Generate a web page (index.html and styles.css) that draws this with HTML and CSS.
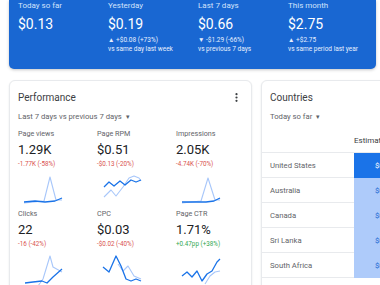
FILE: index.html
```html
<!DOCTYPE html>
<html lang="en">
<head>
    <meta charset="UTF-8">
    <meta name="viewport" content="width=device-width, initial-scale=1.0">
    <title>Earnings overview</title>
    <link rel="stylesheet" href="styles.css">
</head>
<body>
    <div class="page">
        <div class="summary">
            <div class="summary-item">
                <div class="summary-label">Today so far</div>
                <div class="summary-value">$0.13</div>
            </div>
            <div class="summary-item">
                <div class="summary-label">Yesterday</div>
                <div class="summary-value">$0.19</div>
                <div class="summary-change">&#9650; +$0.08 (+73%)</div>
                <div class="summary-change">vs same day last week</div>
            </div>
            <div class="summary-item">
                <div class="summary-label">Last 7 days</div>
                <div class="summary-value">$0.66</div>
                <div class="summary-change">&#9660; -$1.29 (-66%)</div>
                <div class="summary-change">vs previous 7 days</div>
            </div>
            <div class="summary-item">
                <div class="summary-label">This month</div>
                <div class="summary-value">$2.75</div>
                <div class="summary-change">&#9650; +$2.75</div>
                <div class="summary-change">vs same period last year</div>
            </div>
        </div>

        <div class="cards">
            <div class="card performance">
                <div class="card-head">
                    <div class="card-title">Performance</div>
                    <svg class="kebab" width="3" height="9" viewBox="0 0 3 9">
                        <circle cx="1.5" cy="1.2" r="1.1" fill="#3c4043"/>
                        <circle cx="1.5" cy="4.5" r="1.1" fill="#3c4043"/>
                        <circle cx="1.5" cy="7.8" r="1.1" fill="#3c4043"/>
                    </svg>
                </div>
                <div class="dropdown">Last 7 days vs previous 7 days <span class="caret">&#9662;</span></div>

                <div class="metrics">
                    <div class="metric">
                        <div class="metric-label">Page views</div>
                        <div class="metric-value">1.29K</div>
                        <div class="metric-change down">-1.77K (-58%)</div>
                        <svg class="spark" width="40" height="28" viewBox="0 0 40 28">
                            <polyline class="prev" points="0,27 20,25 26,1 32,24 38,24"/>
                            <polyline class="cur" points="0,26 11,25 21,26 31,25 38,22"/>
                        </svg>
                    </div>
                    <div class="metric">
                        <div class="metric-label">Page RPM</div>
                        <div class="metric-value">$0.51</div>
                        <div class="metric-change down">-$0.13 (-20%)</div>
                        <svg class="spark" width="40" height="28" viewBox="0 0 40 28">
                            <polyline class="prev" points="1,21 8,14 13,20 20,11 26,2 31,0 36,2 38,5"/>
                            <polyline class="cur" points="1,11 6,6 11,10 17,5 22,9 28,4 33,6 38,4"/>
                        </svg>
                    </div>
                    <div class="metric">
                        <div class="metric-label">Impressions</div>
                        <div class="metric-value">2.05K</div>
                        <div class="metric-change down">-4.74K (-70%)</div>
                        <svg class="spark" width="40" height="28" viewBox="0 0 40 28">
                            <polyline class="prev" points="0,27 19,25 26,2 33,24 38,24"/>
                            <polyline class="cur" points="0,26 12,26 24,26 32,25 38,22"/>
                        </svg>
                    </div>
                    <div class="metric">
                        <div class="metric-label">Clicks</div>
                        <div class="metric-value">22</div>
                        <div class="metric-change down">-16 (-42%)</div>
                        <svg class="spark" width="40" height="28" viewBox="0 0 40 28">
                            <polyline class="prev" points="14,30 19,23 26,0 29,11 38,16"/>
                            <polyline class="cur" points="1,27 9,26 18,25 23,27 29,21 38,13"/>
                        </svg>
                    </div>
                    <div class="metric">
                        <div class="metric-label">CPC</div>
                        <div class="metric-value">$0.03</div>
                        <div class="metric-change down">-$0.02 (-40%)</div>
                        <svg class="spark" width="40" height="28" viewBox="0 0 40 28">
                            <polyline class="prev" points="15,8 20,15 25,10 31,20 38,23"/>
                            <polyline class="cur" points="0,11 6,16 13,0 18,10 23,23 28,25 33,23 38,25"/>
                        </svg>
                    </div>
                    <div class="metric">
                        <div class="metric-label">Page CTR</div>
                        <div class="metric-value">1.71%</div>
                        <div class="metric-change up">+0.47pp (+38%)</div>
                        <svg class="spark" width="40" height="28" viewBox="0 0 40 28">
                            <polyline class="prev" points="23,28 28,20 33,16 38,15"/>
                            <polyline class="cur" points="0,20 5,16 10,21 15,15 20,25 25,18 30,15 35,6 38,3"/>
                        </svg>
                    </div>
                </div>
            </div>

            <div class="card countries">
                <div class="card-head">
                    <div class="card-title">Countries</div>
                </div>
                <div class="dropdown">Today so far <span class="caret">&#9662;</span></div>

                <div class="country-table">
                    <div class="country-row head">
                        <div class="country-name"></div>
                        <div class="country-value">Estimated earnings</div>
                    </div>
                    <div class="country-row top">
                        <div class="country-name">United States</div>
                        <div class="country-value">$0.09</div>
                    </div>
                    <div class="country-row">
                        <div class="country-name">Australia</div>
                        <div class="country-value">$0.01</div>
                    </div>
                    <div class="country-row">
                        <div class="country-name">Canada</div>
                        <div class="country-value">$0.01</div>
                    </div>
                    <div class="country-row">
                        <div class="country-name">Sri Lanka</div>
                        <div class="country-value">$0.01</div>
                    </div>
                    <div class="country-row">
                        <div class="country-name">South Africa</div>
                        <div class="country-value">$0.01</div>
                    </div>
                </div>
            </div>
        </div>
    </div>
</body>
</html>
```

FILE: styles.css
```css
body {
    margin: 0;
    font-family: Roboto, "Liberation Sans", Arial, sans-serif;
    background: #fff;
    color: #3c4043;
    overflow: hidden;
}
.page {
    padding: 0 0 0 9px;
    width: 560px;
}
.summary {
    display: flex;
    width: 367px;
    height: 69px;
    box-sizing: border-box;
    padding: 0 0 0 9px;
    background: #1967d2;
    color: #fff;
    border-radius: 0 0 5px 5px;
    box-shadow: 0 1px 3px rgba(60, 64, 67, 0.3);
}
.summary-item {
    width: 90px;
    flex-shrink: 0;
}
.summary-label {
    font-size: 8px;
    line-height: 12px;
    color: #d2e3fc;
}
.summary-value {
    font-size: 14px;
    line-height: 22px;
    margin-top: 1px;
    margin-bottom: 1px;
}
.summary-change {
    font-size: 6.5px;
    line-height: 9px;
    color: #e8f0fe;
}
.cards {
    display: flex;
    gap: 9px;
    margin-top: 11px;
}
.card {
    border: 1px solid #e8eaed;
    border-radius: 6px;
    box-shadow: 0 1px 2px rgba(60, 64, 67, 0.12);
    background: #fff;
    height: 240px;
    box-sizing: border-box;
}
.performance {
    width: 243px;
    padding: 8px 9px 0 8px;
}
.countries {
    width: 200px;
    padding: 8px 0 0 0;
}
.card-head {
    display: flex;
    justify-content: space-between;
    align-items: center;
    height: 17px;
}
.countries .card-head,
.countries .dropdown {
    padding-left: 8px;
}
.card-title {
    font-size: 10px;
    color: #3c4043;
}
.kebab {
    margin-right: 4px;
}
.dropdown {
    font-size: 7.7px;
    line-height: 12px;
    color: #5f6368;
    margin-top: 5px;
}
.caret {
    font-size: 7px;
    margin-left: 2px;
}
.metrics {
    display: grid;
    grid-template-columns: 79px 79px 79px;
    grid-auto-rows: 80px;
    margin-top: 5px;
}
.metric-label {
    font-size: 7.2px;
    line-height: 12px;
    color: #5f6368;
}
.metric-value {
    font-size: 13px;
    line-height: 20px;
    color: #202124;
}
.metric-change {
    font-size: 6.3px;
    line-height: 8px;
}
.metric-change.down {
    color: #d9534f;
}
.metric-change.up {
    color: #34a853;
}
.spark {
    display: block;
    margin: 8px 0 0 6px;
    overflow: visible;
}
.spark polyline {
    fill: none;
    stroke-linejoin: round;
}
.spark .prev {
    stroke: #a8c7fa;
    stroke-width: 1.1;
}
.spark .cur {
    stroke: #1a73e8;
    stroke-width: 1.3;
}
.country-table {
    margin-top: 5px;
    font-size: 7.7px;
    color: #5f6368;
}
.country-row {
    display: flex;
    height: 25px;
}
.country-name {
    width: 84px;
    flex-shrink: 0;
    padding-left: 8px;
    display: flex;
    align-items: center;
    border-bottom: 1px solid #e8eaed;
}
.country-value {
    flex: 1;
    display: flex;
    align-items: center;
    padding-left: 21px;
    white-space: nowrap;
    background: #aecbfa;
    color: #1967d2;
}
.country-row.head .country-value {
    background: none;
    color: #3c4043;
    font-size: 8px;
    padding-left: 0;
    border-bottom: 1px solid #e8eaed;
}
.country-row.top .country-value {
    background: #1a73e8;
    color: #fff;
}
```
